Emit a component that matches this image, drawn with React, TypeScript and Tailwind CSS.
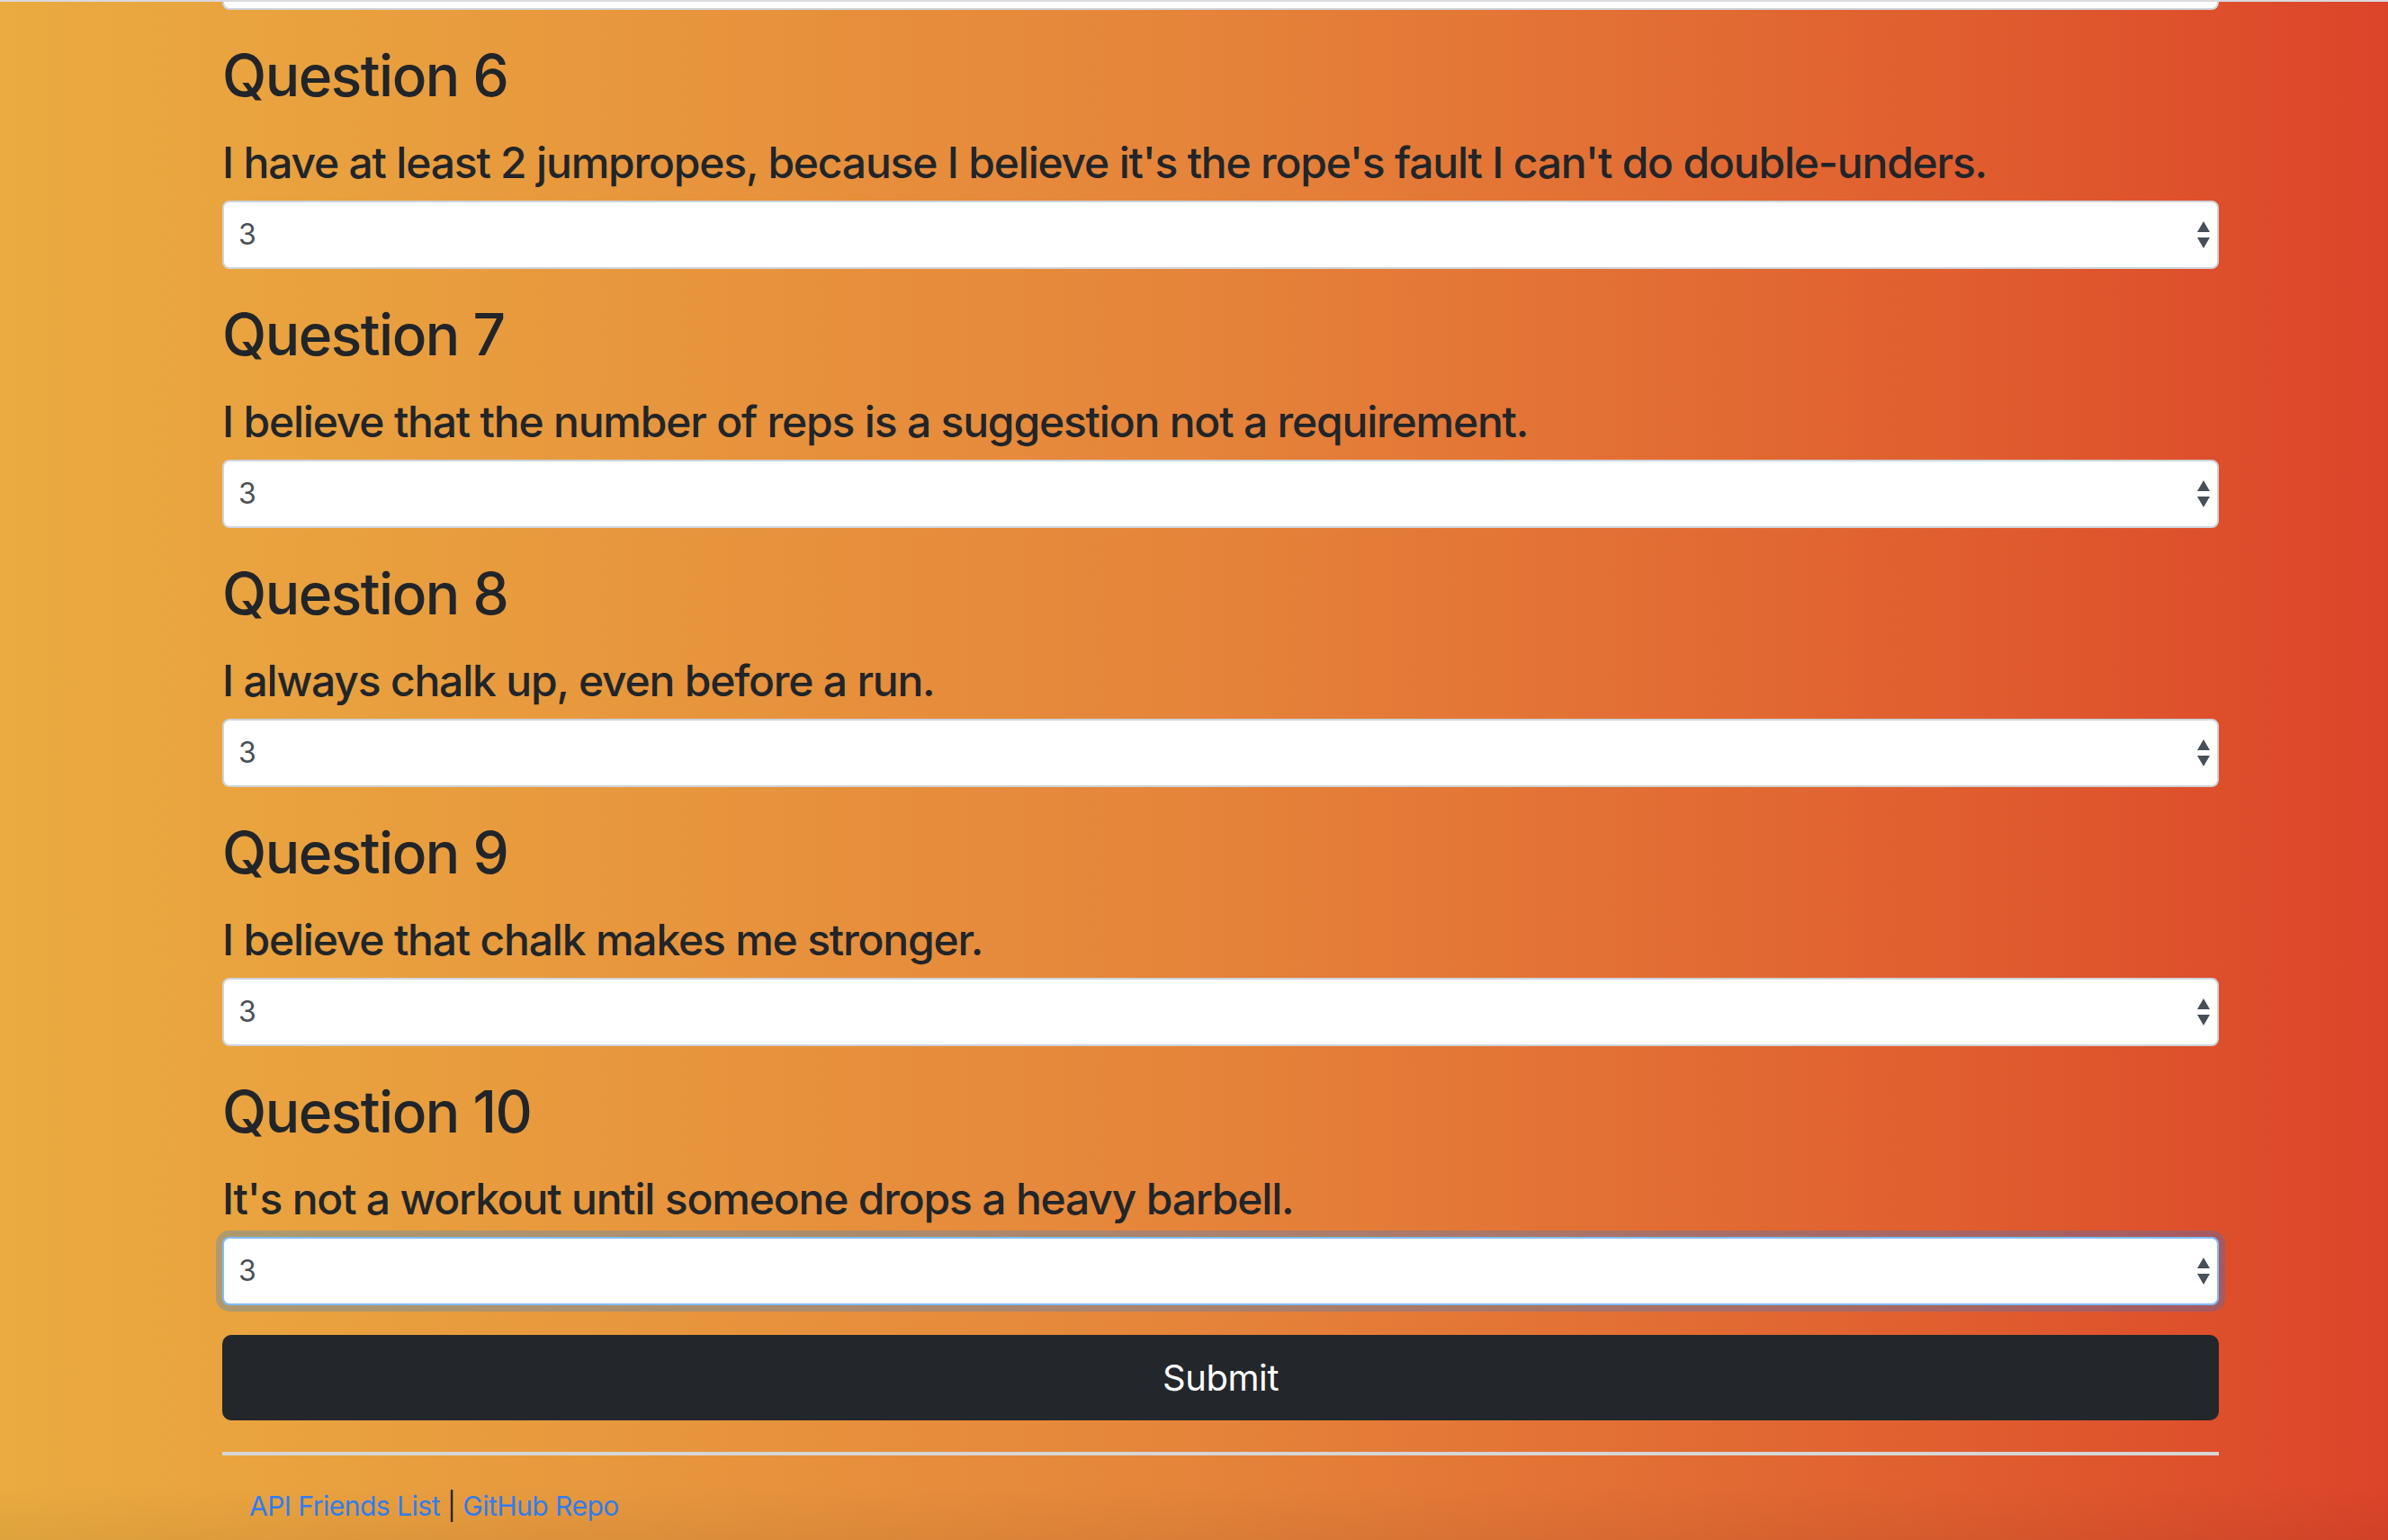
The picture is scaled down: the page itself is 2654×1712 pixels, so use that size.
import React from "react";

const questions = [
  { n: 6, text: "I have at least 2 jumpropes, because I believe it's the rope's fault I can't do double-unders." },
  { n: 7, text: "I believe that the number of reps is a suggestion not a requirement." },
  { n: 8, text: "I always chalk up, even before a run." },
  { n: 9, text: "I believe that chalk makes me stronger." },
  { n: 10, text: "It's not a workout until someone drops a heavy barbell." },
];

function Arrows() {
  return (
    <svg width="14" height="30" viewBox="0 0 14 30" className="absolute right-[10px] top-1/2 -translate-y-1/2 pointer-events-none">
      <polygon points="7,0 14,12 0,12" fill="#474f58" />
      <polygon points="0,18 14,18 7,30" fill="#474f58" />
    </svg>
  );
}

function Select({ focused }: { focused?: boolean }) {
  return (
    <div className="relative mt-[18px]">
      <select
        defaultValue="3"
        className={
          focused
            ? "block w-full h-[76px] appearance-none bg-white rounded-[8px] border-2 border-[#80bdff] pl-[16px] text-[32px] text-[#495057] outline-none shadow-[0_0_0_7px_rgba(0,123,255,0.25)]"
            : "block w-full h-[76px] appearance-none bg-white rounded-[8px] border-2 border-[#ced4da] pl-[16px] text-[32px] text-[#495057] outline-none"
        }
        style={{ fontFamily: "Inter, 'Liberation Sans', sans-serif" }}
      >
        <option value="1">1</option>
        <option value="2">2</option>
        <option value="3">3</option>
        <option value="4">4</option>
        <option value="5">5</option>
      </select>
      <Arrows />
    </div>
  );
}

export default function App() {
  return (
    <div
      className="relative w-full h-[1712px] overflow-hidden bg-linear-to-r from-[#eaab40] via-[#e5843a] to-[#dc4429]"
      style={{ fontFamily: "Inter, 'Liberation Sans', sans-serif" }}
    >
      <div className="h-[2px] bg-[#d9d9de]" />
      <div className="pl-[247px] pr-[188px] flex flex-col">
        <div className="h-[9px] bg-white border-2 border-t-0 border-[#ced4da] rounded-b-[8px]" />
        <div className="flex flex-col gap-[41px] pt-[41px]">
          {questions.map((q) => (
            <div key={q.n} className="flex flex-col">
              <h2 className="text-[64px] leading-none font-medium text-[#212529] tracking-[-1.5px]">Question {q.n}</h2>
              <p className="mt-[41px] text-[48px] leading-none font-medium text-[#212529] tracking-[-1.2px]">{q.text}</p>
              <Select focused={q.n === 10} />
            </div>
          ))}
        </div>
        <button className="mt-[33px] h-[95px] w-full rounded-[10px] bg-[#23272b] text-white text-[40px] leading-none tracking-[-0.4px]">
          Submit
        </button>
        <div className="mt-[35px] h-[4px] bg-[#d8d6d4]" />
        <div className="mt-[41px] pl-[30px] text-[30px] leading-none text-[#212529] tracking-[-0.5px]">
          <a href="#" className="text-[#2f7ff5]">API Friends List</a>
          <span> | </span>
          <a href="#" className="text-[#2f7ff5]">GitHub Repo</a>
        </div>
      </div>
      <div className="absolute left-0 right-0 bottom-0 h-[60px] bg-linear-to-b from-transparent to-black/5 pointer-events-none" />
    </div>
  );
}
